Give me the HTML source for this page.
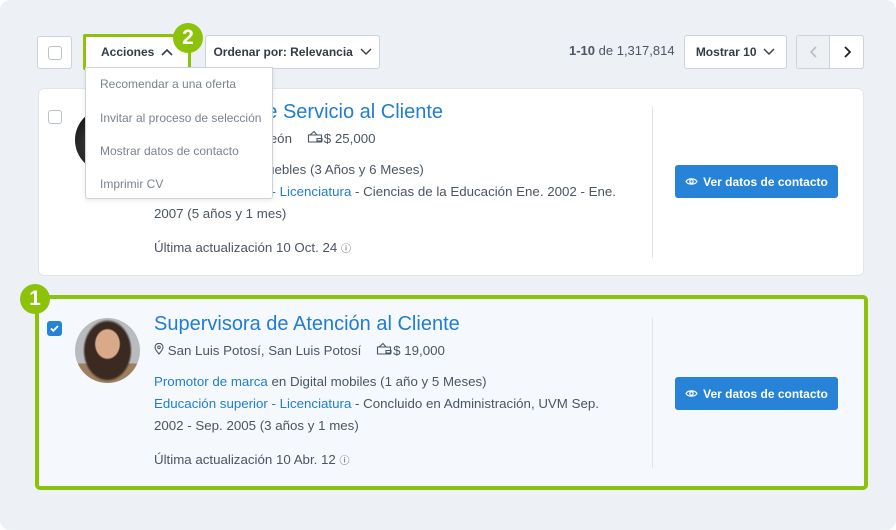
<!DOCTYPE html>
<html><head><meta charset="utf-8"><style>
*{box-sizing:border-box;margin:0;padding:0}
body{width:896px;height:530px;background:#fff;font-family:"Liberation Sans",sans-serif;position:relative;overflow:hidden;color:#4b5563}
.bg{position:absolute;left:0;top:0;width:896px;height:530px;background:#edf0f4;border-radius:10px}
.a{position:absolute}
.btn{position:absolute;background:#fff;border:1px solid #cdd3da;border-radius:3px;font-size:12px;font-weight:bold;color:#333c48;display:flex;align-items:center;justify-content:center}
.cb{position:absolute;width:14px;height:14px;border:1px solid #b9c0c8;border-radius:3px;background:#fff}
.card{position:absolute;background:#fff;border-radius:6px}
.t{position:absolute;white-space:nowrap;font-size:13.3px;color:#4b5563}
.blue{color:#1f7dd4}
.title{font-size:20px;color:#1f7dd4}
.vbtn{position:absolute;width:163px;height:33px;background:#2683d8;border-radius:3px;color:#fff;font-size:12px;font-weight:bold;display:flex;align-items:center;justify-content:center;gap:5px}
.badge{position:absolute;width:30px;height:30px;border-radius:50%;background:#8cc20a;color:#fff;font-weight:bold;font-size:21px;display:flex;align-items:center;justify-content:center}
.menu{position:absolute;left:85px;top:67px;width:188px;height:132px;background:#fff;border:1px solid #cdd3da;border-radius:0 0 3px 3px;box-shadow:0 2px 4px rgba(0,0,0,.08)}
.menu div{position:absolute;left:14px;font-size:12px;color:#7a838e;white-space:nowrap}
</style></head><body>
<div class="bg"></div>
<div class="btn" style="left:37px;top:36px;width:35px;height:33px"><div class="cb" style="position:static"></div></div>
<div class="btn" style="left:83px;top:34px;width:108px;height:36px;border:3px solid #8cc20a;border-radius:2px">Acciones&nbsp;&nbsp;<svg width="12" height="8" viewBox="0 0 12 8"><path d="M1 7l5-5 5 5" fill="none" stroke="#333c48" stroke-width="1.6"/></svg></div>
<div class="badge" style="left:173px;top:23px">2</div>
<div class="btn" style="left:205px;top:35px;width:175px;height:34px">Ordenar por: Relevancia&nbsp;&nbsp;<svg width="12" height="8" viewBox="0 0 12 8"><path d="M1 1l5 5 5-5" fill="none" stroke="#333c48" stroke-width="1.4"/></svg></div>
<div class="t" style="left:569px;top:43px;font-size:13px"><b style="color:#4b5563">1-10</b> de 1,317,814</div>
<div class="btn" style="left:684px;top:35px;width:103px;height:34px">Mostrar 10&nbsp;&nbsp;<svg width="12" height="8" viewBox="0 0 12 8"><path d="M1 1l5 5 5-5" fill="none" stroke="#333c48" stroke-width="1.4"/></svg></div>
<div class="btn" style="left:796px;top:35px;width:34px;height:34px;background:#eef1f4;border-right:none;border-radius:3px 0 0 3px"><svg width="8" height="12" viewBox="0 0 8 12"><path d="M6 1L1 6l5 5" fill="none" stroke="#b8bec6" stroke-width="1.6"/></svg></div>
<div class="btn" style="left:829px;top:35px;width:35px;height:34px;border-radius:0 3px 3px 0"><svg width="8" height="12" viewBox="0 0 8 12"><path d="M2 1l5 5-5 5" fill="none" stroke="#222" stroke-width="1.8"/></svg></div>

<div class="card" style="left:38px;top:88px;width:826px;height:188px;border:1px solid #e1e5ea"></div>
<div class="cb" style="left:48px;top:110px"></div>
<div class="a" style="left:75px;top:108px;width:64px;height:64px;border-radius:50%;background:radial-gradient(circle at 40% 60%,#4a4a4a,#111 70%)"></div>
<div class="t title" style="left:154px;top:101px">Supervisor de Servicio al Cliente</div>
<div class="t" style="left:154px;top:130px">Monterrey, Nuevo León&nbsp;&nbsp;&nbsp;&nbsp;<svg width="17" height="13" viewBox="0 0 17 13"><path d="M1.5 5h13v7h-13z M3 5l4-3.5 3 3.5 M10 8.5h5v2.5h-5z" fill="none" stroke="#4b5563" stroke-width="1.1"/></svg>$ 25,000</div>
<div class="t" style="left:154px;top:162px"><span class="blue">Vendedor</span> en Ecomuebles (3 Años y 6 Meses)</div>
<div class="t" style="left:154px;top:184px"><span class="blue">Educación superior - Licenciatura</span> - Ciencias de la Educación Ene. 2002 - Ene.</div>
<div class="t" style="left:154px;top:206px">2007 (5 años y 1 mes)</div>
<div class="t" style="left:154px;top:240px">Última actualización 10 Oct. 24 <span style="font-size:10px">ⓘ</span></div>
<div class="a" style="left:652px;top:106px;width:1px;height:152px;background:#e1e5ea"></div>
<div class="vbtn" style="left:675px;top:165px"><svg width="13" height="9" viewBox="0 0 13 9"><path d="M1 4.5C3 1 10 1 12 4.5 10 8 3 8 1 4.5z" fill="none" stroke="#fff" stroke-width="1.2"/><circle cx="6.5" cy="4.5" r="1.7" fill="none" stroke="#fff" stroke-width="1.2"/></svg>Ver datos de contacto</div>

<div class="menu">
<div style="top:9px">Recomendar a una oferta</div>
<div style="top:43px">Invitar al proceso de selección</div>
<div style="top:76px">Mostrar datos de contacto</div>
<div style="top:109px">Imprimir CV</div>
</div>

<div class="card" style="left:35px;top:295px;width:833px;height:195px;background:#f5f8fc;border:4px solid #8cc20a;border-radius:5px"></div>
<div class="badge" style="left:20px;top:284px">1</div>
<div class="a" style="left:47px;top:321px;width:15px;height:15px;border-radius:3px;background:#2683d8"><svg width="15" height="15" viewBox="0 0 15 15"><path d="M4 7.5l2.3 2.3L11 5" fill="none" stroke="#fff" stroke-width="1.8"/></svg></div>
<div class="a" style="left:75px;top:318px;width:65px;height:65px;border-radius:50%;background:radial-gradient(ellipse 20% 24% at 50% 40%,#d9a98a 90%,transparent 100%),radial-gradient(ellipse 38% 48% at 50% 50%,#3a2a22 90%,transparent 100%),linear-gradient(#b8bcbf 0 70%,#9c8060 70%)"></div>
<div class="t title" style="left:154px;top:313px">Supervisora de Atención al Cliente</div>
<div class="t" style="left:154px;top:342px"><svg width="10" height="12" viewBox="0 0 10 12"><path d="M5 11S1 6.5 1 4.3a4 4 0 018 0C9 6.5 5 11 5 11z" fill="none" stroke="#4b5563" stroke-width="1.1"/><circle cx="5" cy="4.3" r="1.3" fill="none" stroke="#4b5563"/></svg> San Luis Potosí, San Luis Potosí&nbsp;&nbsp;&nbsp;&nbsp;<svg width="17" height="13" viewBox="0 0 17 13"><path d="M1.5 5h13v7h-13z M3 5l4-3.5 3 3.5 M10 8.5h5v2.5h-5z" fill="none" stroke="#4b5563" stroke-width="1.1"/></svg>$ 19,000</div>
<div class="t" style="left:154px;top:374px"><span class="blue">Promotor de marca</span> en Digital mobiles (1 año y 5 Meses)</div>
<div class="t" style="left:154px;top:396px"><span class="blue">Educación superior - Licenciatura</span> - Concluido en Administración, UVM Sep.</div>
<div class="t" style="left:154px;top:418px">2002 - Sep. 2005 (3 años y 1 mes)</div>
<div class="t" style="left:154px;top:452px">Última actualización 10 Abr. 12 <span style="font-size:10px">ⓘ</span></div>
<div class="a" style="left:652px;top:318px;width:1px;height:150px;background:#e1e5ea"></div>
<div class="vbtn" style="left:675px;top:377px"><svg width="13" height="9" viewBox="0 0 13 9"><path d="M1 4.5C3 1 10 1 12 4.5 10 8 3 8 1 4.5z" fill="none" stroke="#fff" stroke-width="1.2"/><circle cx="6.5" cy="4.5" r="1.7" fill="none" stroke="#fff" stroke-width="1.2"/></svg>Ver datos de contacto</div>
</body></html>
